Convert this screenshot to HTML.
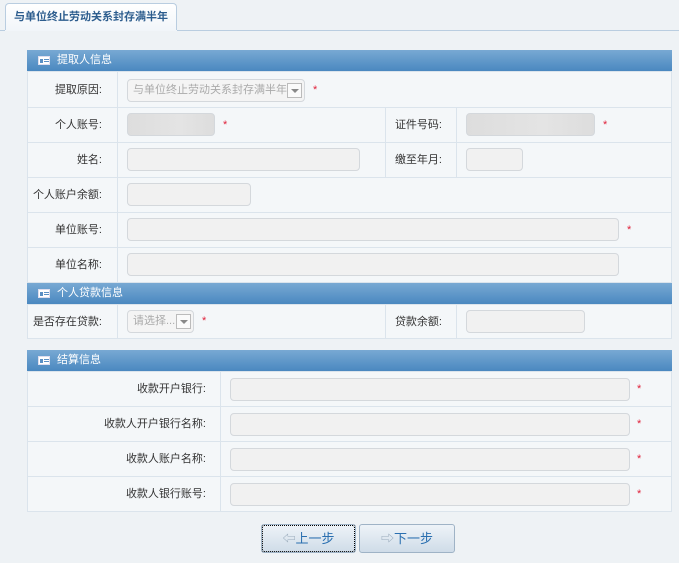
<!DOCTYPE html>
<html><head><meta charset="utf-8"><style>
*{margin:0;padding:0;box-sizing:border-box}
body{width:679px;height:563px;background:#eef2f5;font-family:"Liberation Sans","Noto Sans CJK SC",sans-serif;font-size:11px;color:#333;position:relative;overflow:hidden}
.a{position:absolute;white-space:nowrap}
.tab{left:5px;top:3px;width:172px;height:28px;border:1px solid #b9cde0;border-bottom:none;border-radius:4px 4px 0 0;background:linear-gradient(#fff,#f1f5f9);color:#2d5d8e;font-weight:bold;font-size:11px;line-height:27px;text-align:center}
.tabline{left:0;top:30px;width:679px;height:1px;background:#b9cde0}
.tabline2{left:5px;top:30px;width:172px;height:1px;background:#f1f5f9}
.tbl{left:27px;background:#f4f7f9;border:1px solid #dbe4ec}
.hd{left:27px;width:645px;height:21px;background:linear-gradient(#78a9d3,#4a88c0);color:#fff;font-size:11px;line-height:21px;padding-left:30px}
.hd i{position:absolute;left:11px;top:6px;width:12px;height:9px;background:#fff;border:1px solid #dde}
.hd i:before{content:"";position:absolute;left:1px;top:2px;width:3px;height:4px;background:#5a8fc4}
.hd i:after{content:"";position:absolute;left:5px;top:2px;width:5px;height:1px;background:#5a8fc4;box-shadow:0 2px 0 #5a8fc4}
.h{height:1px;background:#dbe4ec}
.v{width:1px;background:#dbe4ec}
.l{text-align:right;line-height:14px}
.in{height:23px;border:1px solid #d4d8dc;border-radius:4px;background:#f1f1f1}
.bl{background:linear-gradient(90deg,#ddd,#e4e4e4 60%,#ddd)}
.s{color:#e0203a;font-size:11px}
.sel{color:#aaa;line-height:21px;padding-left:5px;background:#f4f4f4;overflow:hidden}
.dd{position:absolute;right:2px;top:3px;width:15px;height:15px;border:1px solid #bbb;background:#fafafa}
.dd:after{content:"";position:absolute;left:3px;top:5px;border:4px solid transparent;border-top:4px solid #888}
.btn{top:524px;height:29px;border:1px solid #9fb3c6;border-radius:3px;background:linear-gradient(#eef3f8,#cfdce8);color:#2a6fb0;font-size:13px;line-height:27px;text-align:center}
</style></head><body>
<div class="a tabline"></div>
<div class="a tab">与单位终止劳动关系封存满半年</div>
<div class="a tabline2"></div>

<div class="a hd" style="top:50px"><i></i>提取人信息</div>
<div class="a tbl" style="top:71px;width:645px;height:212px"></div>
<div class="a h" style="left:27px;top:107px;width:645px"></div>
<div class="a h" style="left:27px;top:142px;width:645px"></div>
<div class="a h" style="left:27px;top:177px;width:645px"></div>
<div class="a h" style="left:27px;top:212px;width:645px"></div>
<div class="a h" style="left:27px;top:247px;width:645px"></div>
<div class="a v" style="left:117px;top:71px;height:212px"></div>
<div class="a v" style="left:385px;top:107px;height:70px"></div>
<div class="a v" style="left:456px;top:107px;height:70px"></div>

<div class="a l" style="left:27px;top:83px;width:75px">提取原因:</div>
<div class="a in sel" style="left:127px;top:79px;width:178px">与单位终止劳动关系封存满半年<span class="dd"></span></div>
<div class="a s" style="left:313px;top:84px">*</div>

<div class="a l" style="left:27px;top:118px;width:75px">个人账号:</div>
<div class="a in bl" style="left:127px;top:113px;width:88px"></div>
<div class="a s" style="left:223px;top:119px">*</div>
<div class="a l" style="left:385px;top:118px;width:57px">证件号码:</div>
<div class="a in bl" style="left:466px;top:113px;width:129px"></div>
<div class="a s" style="left:603px;top:119px">*</div>

<div class="a l" style="left:27px;top:153px;width:75px">姓名:</div>
<div class="a in" style="left:127px;top:148px;width:233px"></div>
<div class="a l" style="left:385px;top:153px;width:57px">缴至年月:</div>
<div class="a in" style="left:466px;top:148px;width:57px"></div>

<div class="a l" style="left:20px;top:188px;width:82px">个人账户余额:</div>
<div class="a in" style="left:127px;top:183px;width:124px"></div>

<div class="a l" style="left:27px;top:223px;width:75px">单位账号:</div>
<div class="a in" style="left:127px;top:218px;width:492px"></div>
<div class="a s" style="left:627px;top:224px">*</div>

<div class="a l" style="left:27px;top:258px;width:75px">单位名称:</div>
<div class="a in" style="left:127px;top:253px;width:492px"></div>

<div class="a hd" style="top:283px"><i></i>个人贷款信息</div>
<div class="a tbl" style="top:304px;width:645px;height:35px"></div>
<div class="a v" style="left:117px;top:304px;height:35px"></div>
<div class="a v" style="left:385px;top:304px;height:35px"></div>
<div class="a v" style="left:456px;top:304px;height:35px"></div>
<div class="a l" style="left:20px;top:315px;width:82px">是否存在贷款:</div>
<div class="a in sel" style="left:127px;top:310px;width:67px">请选择...<span class="dd"></span></div>
<div class="a s" style="left:202px;top:315px">*</div>
<div class="a l" style="left:385px;top:315px;width:57px">贷款余额:</div>
<div class="a in" style="left:466px;top:310px;width:119px"></div>

<div class="a hd" style="top:350px"><i></i>结算信息</div>
<div class="a tbl" style="top:371px;width:645px;height:141px"></div>
<div class="a h" style="left:27px;top:406px;width:645px"></div>
<div class="a h" style="left:27px;top:441px;width:645px"></div>
<div class="a h" style="left:27px;top:476px;width:645px"></div>
<div class="a v" style="left:220px;top:371px;height:141px"></div>

<div class="a l" style="left:27px;top:382px;width:179px">收款开户银行:</div>
<div class="a in" style="left:230px;top:378px;width:400px"></div>
<div class="a s" style="left:637px;top:383px">*</div>
<div class="a l" style="left:27px;top:417px;width:179px">收款人开户银行名称:</div>
<div class="a in" style="left:230px;top:413px;width:400px"></div>
<div class="a s" style="left:637px;top:418px">*</div>
<div class="a l" style="left:27px;top:452px;width:179px">收款人账户名称:</div>
<div class="a in" style="left:230px;top:448px;width:400px"></div>
<div class="a s" style="left:637px;top:453px">*</div>
<div class="a l" style="left:27px;top:487px;width:179px">收款人银行账号:</div>
<div class="a in" style="left:230px;top:483px;width:400px"></div>
<div class="a s" style="left:637px;top:488px">*</div>

<div class="a btn" style="left:261px;width:95px;outline:1px dotted #000;outline-offset:-2px"><span style="color:#9ab">⇦</span>上一步</div>
<div class="a btn" style="left:359px;width:96px"><span style="color:#9ab">⇨</span>下一步</div>
</body></html>
